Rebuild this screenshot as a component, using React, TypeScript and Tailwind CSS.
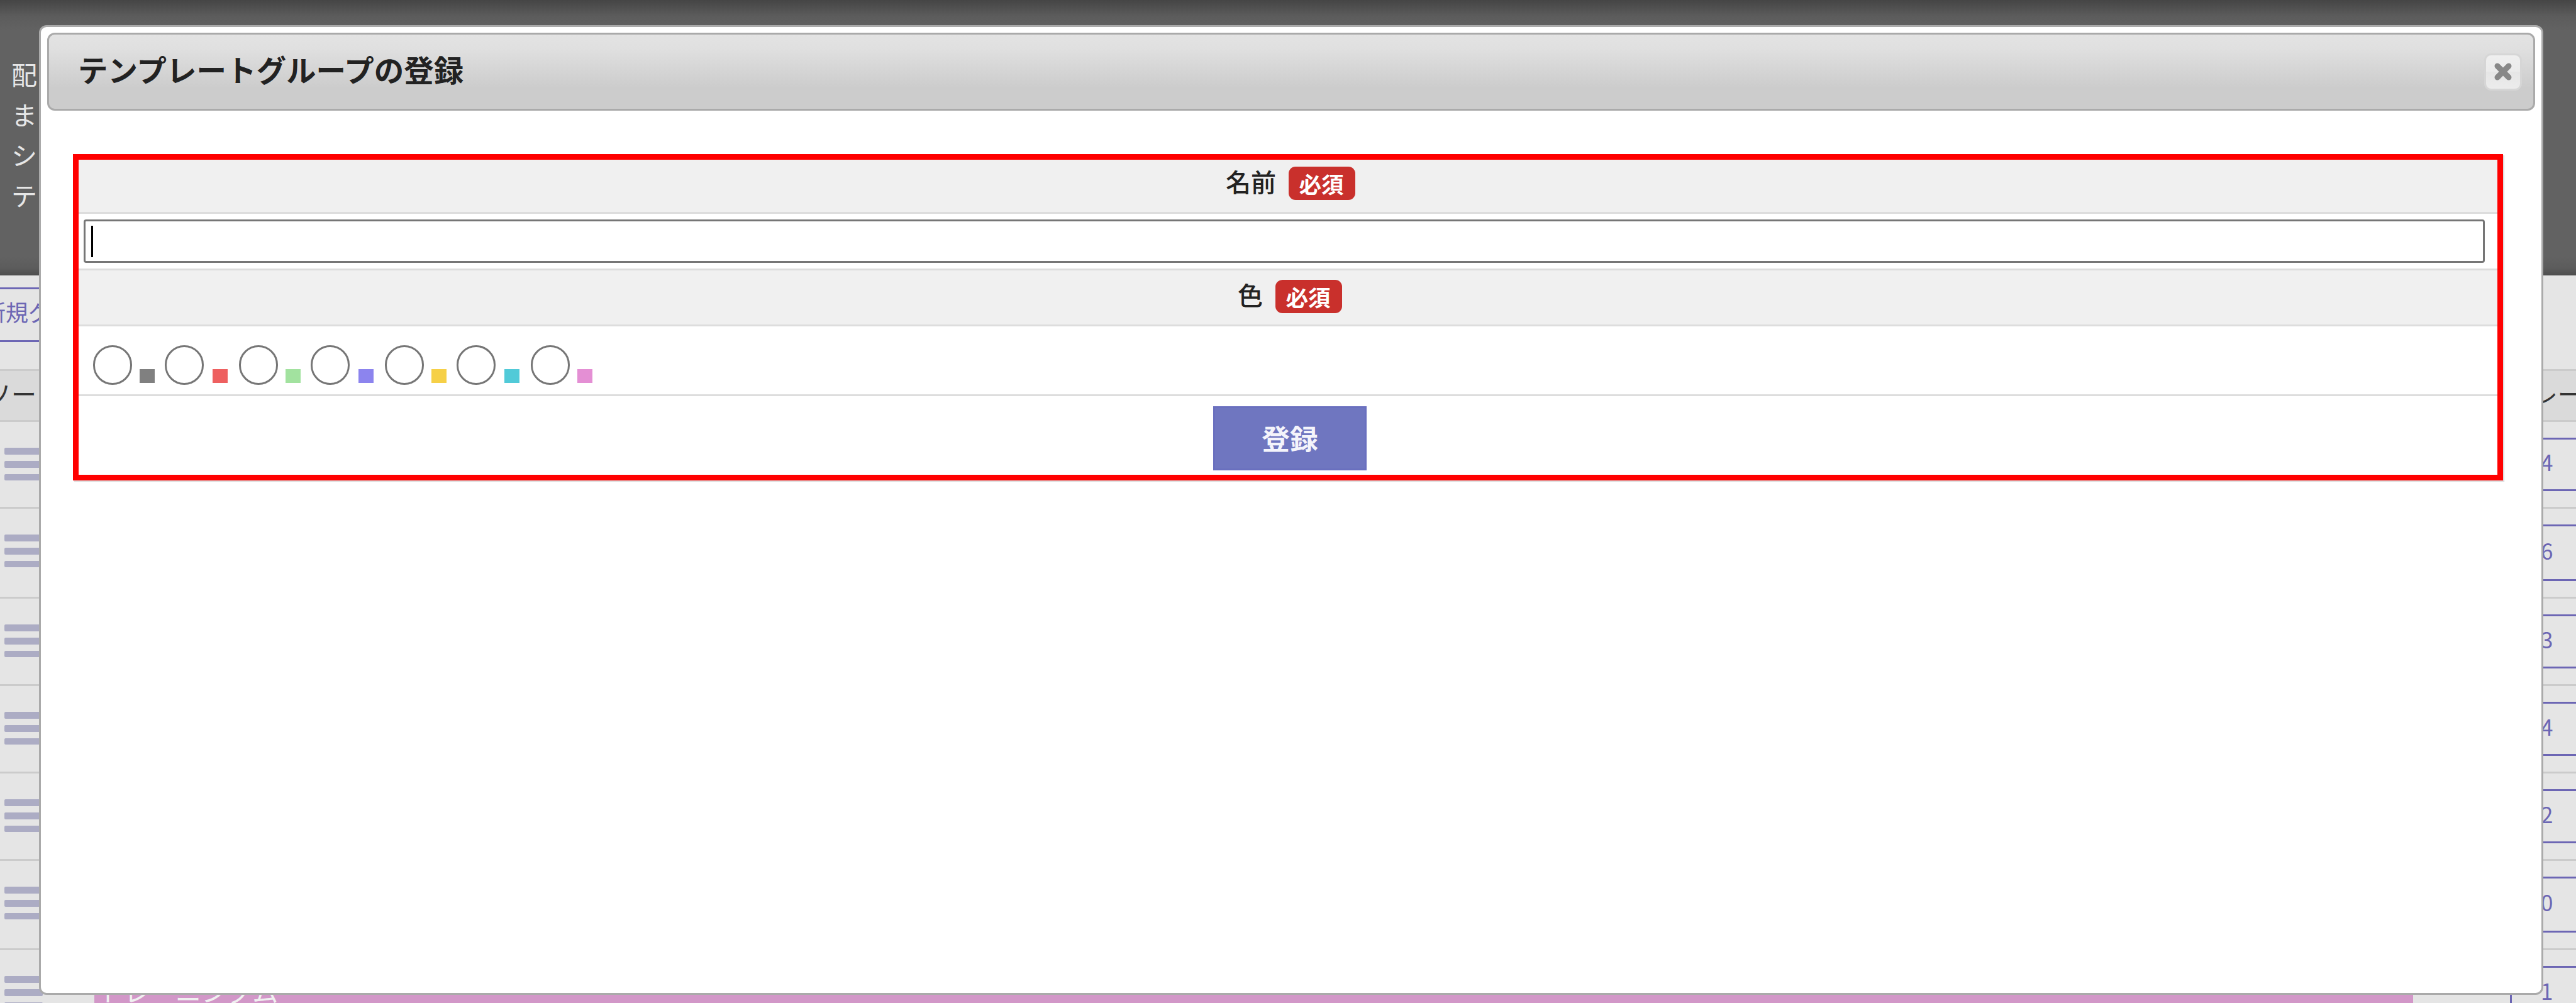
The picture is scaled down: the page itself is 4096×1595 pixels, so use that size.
import React, { useState } from 'react';

interface ListRow {
  count: string;
  height: string;
}

const ROWS: ListRow[] = [
  { count: '4', height: 'h-[138px]' },
  { count: '6', height: 'h-[143px]' },
  { count: '3', height: 'h-[139px]' },
  { count: '4', height: 'h-[139px]' },
  { count: '2', height: 'h-[139px]' },
  { count: '0', height: 'h-[142px]' },
  { count: '1', height: 'h-[139px]' },
];

const COLORS = [
  { name: 'gray', swatch: 'bg-[#808080]' },
  { name: 'red', swatch: 'bg-[#ee6060]' },
  { name: 'green', swatch: 'bg-[#a2e29f]' },
  { name: 'purple', swatch: 'bg-[#8c84ee]' },
  { name: 'yellow', swatch: 'bg-[#f6d047]' },
  { name: 'cyan', swatch: 'bg-[#51cad8]' },
  { name: 'pink', swatch: 'bg-[#e48fd4]' },
];

const Handle: React.FC = () => (
  <div className="ml-[7px] flex w-[61px] flex-col gap-[10px] pt-[41px]">
    <span className="h-[11px] rounded-xs bg-[#acacc4]" />
    <span className="h-[11px] rounded-xs bg-[#acacc4]" />
    <span className="h-[10px] rounded-xs bg-[#acacc4]" />
  </div>
);

const RequiredBadge: React.FC = () => (
  <span className="flex h-[53px] w-[106px] items-center justify-center rounded-[11px] bg-[#c9302c] pt-px pr-[2px] text-[35.5px] leading-none font-bold text-white">
    必須
  </span>
);

// List page that stays visible around the dialog
const BackgroundPage: React.FC = () => (
  <div className="flex h-full flex-col bg-[#e5e5e5]">
    <header className="h-[438px] shrink-0 bg-[linear-gradient(#454545_0,#5c5c5c_26px,#626262_48px,#626262_408px,#5c5c5c_426px,#4e4e4e_438px)] pt-[85px] pl-[18px] text-[41px] leading-[64px] text-[#e6e6e6]">
      <p>配</p>
      <p>ま</p>
      <p>シ</p>
      <p>テ</p>
    </header>
    <div className="h-[149px] shrink-0 pt-[19px]">
      <div className="-ml-[60px] flex h-[87px] w-[400px] items-center border-[3px] border-[#6c66b4] pb-[11px] pl-[30px] text-[36px] leading-none whitespace-nowrap text-[#6c66b4]">
        新規グループ
      </div>
    </div>
    <div className="flex h-[84px] shrink-0 items-center border-y-[3px] border-[#cbcbcb] bg-[#dadada] pb-[8px] text-[40px] leading-none text-[#333]">
      <span className="-ml-[22px] flex-1">ソート</span>
      <span className="-mr-[100px] w-[288px] whitespace-nowrap">テンプレート</span>
    </div>
    {ROWS.map((row, i) => (
      <div key={i} className={`flex shrink-0 border-b-[3px] border-[#cbcbcb] ${row.height}`}>
        <Handle />
        <div className="ml-[82px] flex w-[3687px] items-center">
          {i === ROWS.length - 1 && (
            <span className="flex h-[88px] w-full items-center bg-[#d297c8] pb-[8px] pl-[6px] text-[41px] leading-none text-[#f0f0f0]">
              トレーニングム
            </span>
          )}
        </div>
        <div className="ml-[154px] flex w-[105px] py-[25px]">
          <div className="flex flex-1 items-center border-[3px] border-r-0 border-[#6c66b4] pb-[10px] pl-[46px] text-[35px] leading-none text-[#6c66b4]">
            {row.count}
          </div>
        </div>
      </div>
    ))}
  </div>
);

const RegisterDialog: React.FC = () => {
  const [name, setName] = useState('');
  const [color, setColor] = useState('');

  return (
    <div className="absolute top-[40px] left-[62px] flex h-[1542px] w-[3982px] flex-col rounded-[12px] border-[3px] border-[#aaa] bg-white px-[10px] pt-[9px]">
      <div className="flex h-[124px] shrink-0 items-center justify-between rounded-[12px] border-[3px] border-[#aaa] bg-[linear-gradient(#e3e3e3_0%,#e0e0e0_18%,#cccccc_72%,#cccccc_100%)] pr-[18px] pl-[46px]">
        <h1 className="pb-[8px] text-[47.5px] leading-none font-bold text-[#222]">テンプレートグループの登録</h1>
        <button
          type="button"
          aria-label="close"
          className="flex h-[59px] w-[60px] items-center justify-center rounded-[11px] border-[3px] border-[#d6d6d6] bg-[linear-gradient(#efefef_0%,#ebebeb_50%,#e6e6e6_50%,#ececec_100%)]"
        >
          <svg viewBox="0 0 30 30" className="h-[30px] w-[30px]">
            <path d="M6 6L24 24M24 6L6 24" stroke="#888" strokeWidth="9" strokeLinecap="round" />
          </svg>
        </button>
      </div>

      <form
        onSubmit={e => e.preventDefault()}
        className="mt-[69px] ml-[41px] flex h-[519px] w-[3864px] flex-col border-[9px] border-[#f00] bg-white shadow-[2px_2px_1px_#ddd]"
      >
        {/* 名前 */}
        <div className="flex h-[86px] shrink-0 items-start justify-center gap-[20px] border-b-[3px] border-[#ddd] bg-[#f0f0f0] pt-[11px] pl-[8px]">
          <label className="pt-[3px] text-[40px] leading-none font-medium text-[#222]">名前</label>
          <RequiredBadge />
        </div>
        <div className="flex h-[90px] shrink-0 items-start border-b-[3px] border-[#ddd] pt-[9px] pl-[8px]">
          <div className="flex h-[69px] w-[3818px] items-center rounded-[4px] border-[3px] border-[#767676] pl-[9px]">
            <span className="h-[50px] w-[3px] bg-black" />
            <input
              type="text"
              value={name}
              onChange={e => setName(e.target.value)}
              className="flex-1 text-[40px] outline-none"
            />
          </div>
        </div>

        {/* 色 */}
        <div className="flex h-[89px] shrink-0 items-start justify-center gap-[20px] border-b-[3px] border-[#ddd] bg-[#f0f0f0] pt-[15px] pl-[6px]">
          <label className="pt-[3px] text-[40px] leading-none font-medium text-[#222]">色</label>
          <RequiredBadge />
        </div>
        <div className="flex h-[111px] shrink-0 items-start border-b-[3px] border-[#ddd] pt-[30px] pl-[23px]">
          {COLORS.map(c => (
            <label key={c.name} className="flex items-end gap-[12px] pr-[16px] even:gap-[14px] even:pr-[18px]">
              <input
                type="radio"
                name="color"
                checked={color === c.name}
                onChange={() => setColor(c.name)}
                className="h-[63px] w-[62px] appearance-none rounded-full border-[3px] border-[#767676] bg-white"
              />
              <span className={`mb-[3px] h-[22px] w-[24px] ${c.swatch}`} />
            </label>
          ))}
        </div>

        <div className="flex flex-1 justify-center pt-[16px]">
          <button
            type="submit"
            className="ml-[6px] h-[102px] w-[244px] border-[3px] border-[#6a70bf] bg-[#6f76c0] pb-[2px] text-[44.8px] leading-none font-bold text-[#f4f4fb]"
          >
            登録
          </button>
        </div>
      </form>
    </div>
  );
};

export default function App() {
  return (
    <div
      lang="ja"
      className="relative h-[1595px] w-[4096px] overflow-hidden font-['Noto_Sans_CJK_JP',sans-serif]"
    >
      <BackgroundPage />
      <RegisterDialog />
    </div>
  );
}
